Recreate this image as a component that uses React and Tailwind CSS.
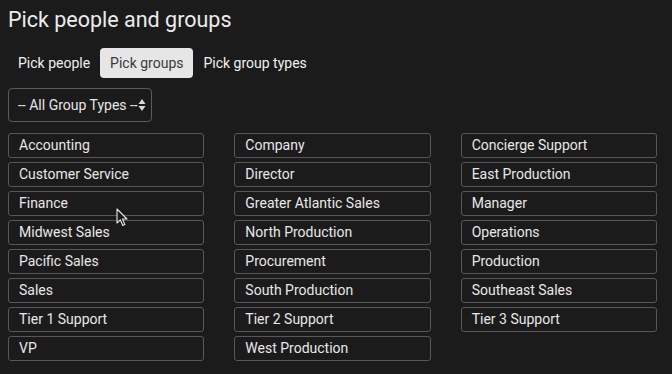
import React, { useState } from 'react';

const groups = [
  'Accounting', 'Company', 'Concierge Support',
  'Customer Service', 'Director', 'East Production',
  'Finance', 'Greater Atlantic Sales', 'Manager',
  'Midwest Sales', 'North Production', 'Operations',
  'Pacific Sales', 'Procurement', 'Production',
  'Sales', 'South Production', 'Southeast Sales',
  'Tier 1 Support', 'Tier 2 Support', 'Tier 3 Support',
  'VP', 'West Production',
];

const tabs = ['Pick people', 'Pick groups', 'Pick group types'];

export default function App() {
  const [tab, setTab] = useState('Pick groups');

  return (
    <div
      className="relative w-[672px] h-[374px] overflow-hidden bg-[#1c1b1c] text-[#e6e6e6]"
      style={{ fontFamily: 'Roboto, "Liberation Sans", sans-serif' }}
    >
      <h1 className="pl-[8px] pt-[5px] text-[21.5px] leading-[30px] text-[#ececec]">
        Pick people and groups
      </h1>

      {/* Tabs */}
      <div className="flex items-center pl-[8px] mt-[13px]">
        {tabs.map((t) => (
          <button
            key={t}
            onClick={() => setTab(t)}
            className={
              t === tab
                ? 'h-[30px] px-[10px] rounded-[4px] bg-[#e6e6e6] text-[#3a3a3a] text-[14px]'
                : 'h-[30px] px-[10px] rounded-[4px] text-[#f0f0f0] text-[14px]'
            }
          >
            {t}
          </button>
        ))}
      </div>

      {/* Select */}
      <div className="pl-[8px] mt-[10px]">
        <div className="flex items-center w-[144px] h-[34px] pl-[9px] pr-[5px] border border-[#5c5c5c] rounded-[4px] text-[14px] text-[#e6e6e6]">
          <span className="flex-1">-- All Group Types --</span>
          <svg width="8" height="14" viewBox="0 0 8 14">
            <path d="M4 1 L7.5 6 L0.5 6 Z" fill="#d8d8d8" />
            <path d="M4 13 L7.5 8 L0.5 8 Z" fill="#d8d8d8" />
          </svg>
        </div>
      </div>

      {/* Group grid */}
      <div className="grid grid-cols-3 gap-x-[30px] gap-y-[4px] w-[649px] ml-[8px] mt-[11px]">
        {groups.map((g) => (
          <div
            key={g}
            className="h-[25px] flex items-center pl-[10px] border border-[#575757] rounded-[3px] text-[14px] text-[#e8e8e8]"
          >
            {g}
          </div>
        ))}
      </div>

      {/* Mouse cursor */}
      <svg
        className="absolute left-[116px] top-[208px]"
        width="13"
        height="19"
        viewBox="0 0 13 19"
      >
        <path
          d="M1 1 L1 15 L4.3 11.8 L6.8 17.5 L8.9 16.6 L6.5 11 L11 11 Z"
          fill="#1c1b1c"
          stroke="#e8e8e8"
          strokeWidth="1.1"
          strokeLinejoin="round"
        />
      </svg>
    </div>
  );
}
